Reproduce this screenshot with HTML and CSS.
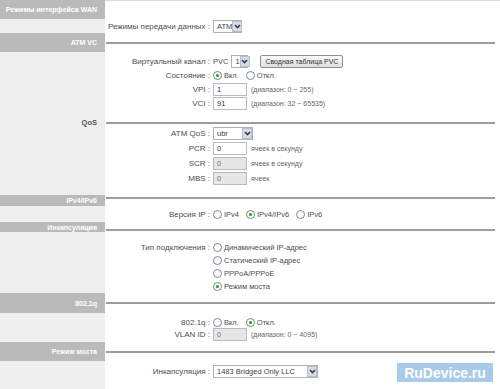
FILE: index.html
```html
<!DOCTYPE html>
<html lang="ru">
<head>
  <meta charset="UTF-8" />
  <title>WAN</title>
  <link rel="stylesheet" href="styles.css">
</head>
<body>

<div class="page">

  <section class="sec">
    <div class="head bar h19">Режимы интерфейса WAN</div>
    <div class="rule first"></div>
    <div class="body">
      <div class="row r14">
        <span class="label">Режимы передачи данных :</span>
        <span class="val">
          <span class="select w29"><span class="opt">ATM</span><span class="arrow"><svg width="7" height="5" viewBox="0 0 7 5"><path d="M1 1l2.5 2.5L6 1" fill="none" stroke="#2e3a4e" stroke-width="1.6"/></svg></span></span>
        </span>
      </div>
    </div>
  </section>

  <section class="sec">
    <div class="head bar h19">ATM VC</div>
    <div class="rule"><div class="line"></div></div>
    <div class="body pad-atm">
      <div class="row r14">
        <span class="label">Виртуальный канал :</span>
        <span class="val tight">
          PVC
          <span class="select w17"><span class="opt">1</span><span class="arrow"><svg width="7" height="5" viewBox="0 0 7 5"><path d="M1 1l2.5 2.5L6 1" fill="none" stroke="#2e3a4e" stroke-width="1.6"/></svg></span></span>
          <span class="button">Сводная таблица PVC</span>
        </span>
      </div>
      <div class="row r14">
        <span class="label">Состояние :</span>
        <span class="val">
          <span class="choice"><span class="radio on"></span>Вкл.</span>
          <span class="choice"><span class="radio"></span>Откл.</span>
        </span>
      </div>
      <div class="row r14">
        <span class="label">VPI :</span>
        <span class="val"><span class="input">1</span><span class="hint">(диапазон: 0 ~ 255)</span></span>
      </div>
      <div class="row r14">
        <span class="label">VCI :</span>
        <span class="val"><span class="input">91</span><span class="hint">(диапазон: 32 ~ 65535)</span></span>
      </div>
    </div>
  </section>

  <section class="sec">
    <div class="head sub h7">QoS</div>
    <div class="rule"><div class="line"></div></div>
    <div class="body pad-qos">
      <div class="row r15">
        <span class="label">ATM QoS :</span>
        <span class="val">
          <span class="select w40"><span class="opt">ubr</span><span class="arrow"><svg width="7" height="5" viewBox="0 0 7 5"><path d="M1 1l2.5 2.5L6 1" fill="none" stroke="#2e3a4e" stroke-width="1.6"/></svg></span></span>
        </span>
      </div>
      <div class="row r15">
        <span class="label">PCR :</span>
        <span class="val"><span class="input">0</span><span class="hint">ячеек в секунду</span></span>
      </div>
      <div class="row r15">
        <span class="label">SCR :</span>
        <span class="val"><span class="input off">0</span><span class="hint">ячеек в секунду</span></span>
      </div>
      <div class="row r15">
        <span class="label">MBS :</span>
        <span class="val"><span class="input off">0</span><span class="hint">ячеек</span></span>
      </div>
    </div>
  </section>

  <section class="sec">
    <div class="head bar h11">IPv4/IPv6</div>
    <div class="rule top"><div class="line"></div></div>
    <div class="body">
      <div class="row r16">
        <span class="label">Версия IP :</span>
        <span class="val">
          <span class="choice"><span class="radio"></span>IPv4</span>
          <span class="choice"><span class="radio on"></span>IPv4/IPv6</span>
          <span class="choice"><span class="radio"></span>IPv6</span>
        </span>
      </div>
    </div>
  </section>

  <section class="sec">
    <div class="head bar h10">Инкапсуляция</div>
    <div class="rule bottom"><div class="line"></div></div>
    <div class="body pad-encap">
      <div class="row r13">
        <span class="label">Тип подключения :</span>
        <span class="val"><span class="choice"><span class="radio"></span>Динамический IP-адрес</span></span>
      </div>
      <div class="row r13">
        <span class="label"></span>
        <span class="val"><span class="choice"><span class="radio"></span>Статический IP-адрес</span></span>
      </div>
      <div class="row r13">
        <span class="label"></span>
        <span class="val"><span class="choice"><span class="radio"></span>PPPoA/PPPoE</span></span>
      </div>
      <div class="row r13">
        <span class="label"></span>
        <span class="val"><span class="choice"><span class="radio on"></span>Режим моста</span></span>
      </div>
    </div>
  </section>

  <section class="sec">
    <div class="head bar h20">802.1q</div>
    <div class="rule"><div class="line"></div></div>
    <div class="body pad-vlan">
      <div class="row r12">
        <span class="label">802.1q :</span>
        <span class="val">
          <span class="choice"><span class="radio"></span>Вкл.</span>
          <span class="choice"><span class="radio on"></span>Откл.</span>
        </span>
      </div>
      <div class="row r12">
        <span class="label">VLAN ID :</span>
        <span class="val"><span class="input off">0</span><span class="hint">(диапазон: 0 ~ 4095)</span></span>
      </div>
    </div>
  </section>

  <section class="sec">
    <div class="head bar h19">Режим моста</div>
    <div class="rule"><div class="line"></div></div>
    <div class="body pad-bridge">
      <div class="row r14">
        <span class="label">Инкапсуляция :</span>
        <span class="val">
          <span class="select w105"><span class="opt">1483 Bridged Only LLC</span><span class="arrow"><svg width="7" height="5" viewBox="0 0 7 5"><path d="M1 1l2.5 2.5L6 1" fill="none" stroke="#2e3a4e" stroke-width="1.6"/></svg></span></span>
        </span>
      </div>
    </div>
  </section>

  <div class="watermark">RuDevice.ru</div>
</div>

</body>
</html>
```

FILE: styles.css
```css
html, body {
  margin: 0;
  padding: 0;
  background: #fff;
}

body {
  font-family: 'Liberation Sans', Arial, sans-serif;
  font-size: 7.5px;
  color: #4d4d4d;
}

.page {
  position: relative;
  min-height: 389px;
  background: linear-gradient(to right, #efefef 105px, #fff 105px);
}

.sec {
  display: grid;
  grid-template-columns: 105px 1fr;
}

/* left column titles */
.head {
  box-sizing: border-box;
  padding-right: 8px;
  font-size: 7px;
  font-weight: bold;
  white-space: nowrap;
  display: flex;
  align-items: center;
  justify-content: flex-end;
}

.bar {
  background: #bababa;
  color: #fff;
}

.sub {
  color: #555;
  font-size: 7.5px;
}

.h7 { height: 7px; }
.h10 { height: 10px; }
.h11 { height: 11px; }
.h19 { height: 19px; }
.h20 { height: 20px; }

/* right column separator */
.rule {
  display: flex;
  align-items: center;
  padding: 0 5px 0 1px;
}

.rule.first {
  border-top: 1px solid #dcdcdc;
}

.rule.top {
  align-items: flex-start;
  padding-top: 2px;
}

.rule.bottom {
  align-items: flex-end;
  padding-bottom: 1px;
}

.line {
  flex: 1;
  height: 0;
  border-top: 2px solid #9d9d9d;
}

.body {
  grid-column: 2;
  padding-left: 1px;
}

.pad-atm { padding-top: 2px; padding-bottom: 9px; }
.pad-qos { padding-bottom: 9px; }
.pad-encap { padding-top: 9px; }
.pad-vlan { padding-top: 3px; padding-bottom: 2px; }
.pad-bridge { padding-top: 3px; }

.row {
  display: flex;
  align-items: center;
  white-space: nowrap;
}

.r12 { height: 12px; }
.r13 { height: 13px; }
.r14 { height: 14px; }
.r15 { height: 15px; }
.r16 { height: 16px; }

.label {
  width: 104px;
  flex: none;
  text-align: right;
  font-size: 8px;
}

.val {
  margin-left: 3px;
  display: flex;
  align-items: center;
  gap: 4px;
}

.val.tight {
  gap: 3px;
}

/* fake select */
.select {
  box-sizing: border-box;
  height: 13px;
  border: 1px solid #a9b3c0;
  background: #fff;
  display: inline-flex;
  align-items: center;
  justify-content: space-between;
  padding-left: 3px;
  color: #444;
}

.w17 { width: 17px; }
.w29 { width: 29px; }
.w40 { width: 40px; }
.w105 { width: 105px; }

.arrow {
  box-sizing: border-box;
  flex: none;
  width: 10px;
  height: 11px;
  background: #d8dde5;
  border: 1px solid #b6bfcb;
  display: flex;
  align-items: center;
  justify-content: center;
}

.button {
  box-sizing: border-box;
  height: 13px;
  margin-left: 9px;
  padding: 0 4px;
  border: 1px solid #8f8f8f;
  border-radius: 2px;
  background: linear-gradient(#fafafa, #dedede);
  color: #333;
  font-size: 7px;
  display: inline-flex;
  align-items: center;
}

.input {
  box-sizing: border-box;
  width: 34px;
  height: 13px;
  border: 1px solid #b3bdc8;
  background: #fff;
  padding-left: 3px;
  display: inline-flex;
  align-items: center;
  color: #333;
}

.input.off {
  background: #e6e6e6;
  color: #777;
}

.hint {
  color: #666;
  font-size: 7px;
}

.choice {
  display: inline-flex;
  align-items: center;
  gap: 2px;
  margin-right: 3px;
  font-size: 7.5px;
}

.radio {
  box-sizing: border-box;
  width: 9px;
  height: 9px;
  border: 1px solid #7d8796;
  border-radius: 50%;
  background: #fff;
  position: relative;
}

.radio.on {
  border-color: #5a9e5c;
}

.radio.on::after {
  content: "";
  position: absolute;
  left: 2px;
  top: 2px;
  width: 3px;
  height: 3px;
  border-radius: 50%;
  background: #2f8f35;
}

.watermark {
  position: absolute;
  right: 7px;
  bottom: 7px;
  width: 96px;
  height: 19px;
  background: #a7cbe9;
  color: #fff;
  font-family: 'Liberation Sans', Arial, sans-serif;
  font-weight: bold;
  font-size: 14px;
  display: flex;
  align-items: center;
  justify-content: center;
}
```
